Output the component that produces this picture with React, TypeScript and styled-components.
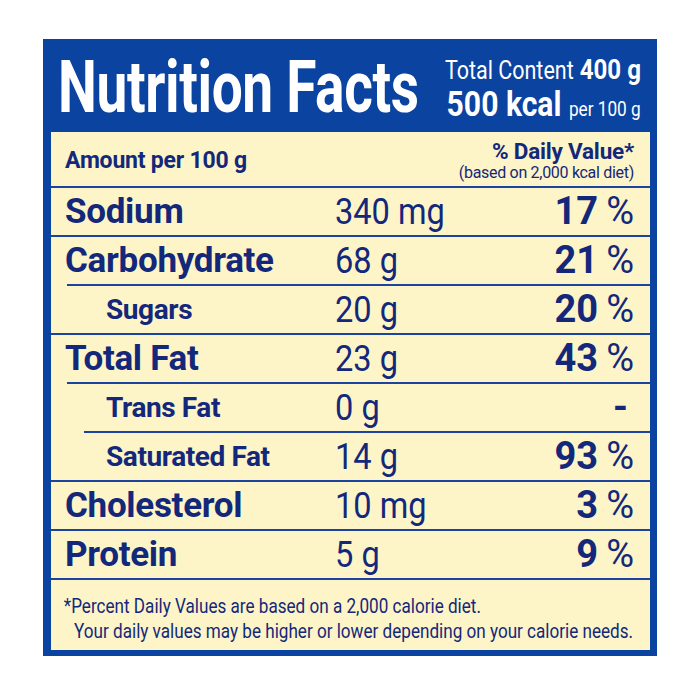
import React from "react";
import styled, { createGlobalStyle } from "styled-components";

const BLUE = "#0b43a0";
const NAVY = "#13287a";
const RULE = "#1a44a0";
const CREAM = "#fdf4c8";

const Global = createGlobalStyle`
  html, body { margin: 0; padding: 0; background: #ffffff; }
  body { font-family: Roboto, "Liberation Sans", Arial, sans-serif; }
`;

const Page = styled.div`
  width: 700px;
  height: 700px;
  padding: 39px 0 0 43px;
  box-sizing: border-box;
`;

const Label = styled.div`
  width: 614px;
  background: ${BLUE};
  display: flex;
  flex-direction: column;
  padding-bottom: 6px;
`;

const Header = styled.header`
  height: 93px;
  display: flex;
  align-items: flex-start;
  padding: 0 16px 0 15px;
  color: #ffffff;
`;

const Title = styled.h1`
  flex: 0 0 340px;
  min-width: 0;
  margin: 13px 0 0;
  font-family: Roboto, "Liberation Sans", sans-serif;
  font-weight: 700;
  font-size: 72px;
  line-height: 72px;
  letter-spacing: -0.5px;
  white-space: nowrap;
  transform: scaleX(0.765);
  transform-origin: left center;
`;

const Summary = styled.div`
  margin: 14px 0 0 auto;
  display: flex;
  flex-direction: column;
  align-items: flex-end;
`;

const SummaryLine = styled.div<{ $size: number; $lh: number }>`
  font-size: ${(p) => p.$size}px;
  line-height: ${(p) => p.$lh}px;
  white-space: nowrap;
  transform: scaleX(0.86);
  transform-origin: right center;
`;

const Light = styled.span<{ $size: number }>`
  font-weight: 400;
  font-size: ${(p) => p.$size}px;
`;

const Heavy = styled.span<{ $size: number }>`
  font-weight: 700;
  font-size: ${(p) => p.$size}px;
`;

const Panel = styled.div`
  margin: 0 7px 0 8px;
  background: ${CREAM};
  color: ${NAVY};
  display: flex;
  flex-direction: column;
`;

const HeadRow = styled.div`
  height: 54px;
  display: flex;
  justify-content: space-between;
  align-items: flex-start;
  padding: 0 16px 0 14px;
`;

const Amount = styled.div`
  margin-top: 17px;
  font-weight: 700;
  font-size: 23px;
  line-height: 23px;
  letter-spacing: -0.2px;
`;

const DailyHead = styled.div`
  margin-top: 8px;
  display: flex;
  flex-direction: column;
  align-items: flex-end;
`;

const DailyTitle = styled.div`
  font-weight: 700;
  font-size: 22.5px;
  line-height: 23px;
  letter-spacing: -0.2px;
`;

const DailyNote = styled.div`
  font-weight: 400;
  font-size: 16px;
  line-height: 19px;
  letter-spacing: -0.3px;
`;

const Rule = styled.div<{ $inset: number }>`
  height: 2px;
  background: ${RULE};
  margin-left: ${(p) => p.$inset}px;
`;

const Row = styled.div`
  height: 47px;
  display: grid;
  grid-template-columns: 272px 1fr auto;
  align-items: center;
  padding: 0 16px 0 14px;
`;

const Name = styled.div<{ $sub: boolean }>`
  padding-left: ${(p) => (p.$sub ? 41 : 0)}px;
  font-weight: 700;
  font-size: ${(p) => (p.$sub ? 28 : 35)}px;
  line-height: 35px;
  letter-spacing: ${(p) => (p.$sub ? -0.4 : -0.3)}px;
  white-space: nowrap;
`;

const Amt = styled.div`
  margin-left: -2px;
  font-weight: 400;
  font-size: 37px;
  line-height: 35px;
  white-space: nowrap;
  transform: scaleX(0.88);
  transform-origin: left center;
`;

const Pct = styled.div`
  display: flex;
  align-items: baseline;
  justify-content: flex-end;
  font-size: 38px;
  line-height: 35px;
  white-space: nowrap;
`;

const PctNum = styled.span`
  font-weight: 700;
`;

const PctSign = styled.span`
  font-weight: 400;
  margin-left: 8px;
`;

const Dash = styled.span`
  font-weight: 700;
  margin-right: 6px;
`;

const Footer = styled.div`
  height: 70px;
  padding-top: 14px;
  box-sizing: border-box;
  display: flex;
  flex-direction: column;
`;

const FootLine = styled.div<{ $indent: number }>`
  padding-left: ${(p) => p.$indent}px;
  font-size: 20px;
  line-height: 25px;
  white-space: nowrap;
  transform: scaleX(0.855);
  transform-origin: left center;
`;

type Nutrient = {
  label: string;
  value: string;
  pct: string;
  sub: boolean;
  inset: number;
};

const rows: Nutrient[] = [
  { label: "Sodium", value: "340 mg", pct: "17", sub: false, inset: 0 },
  { label: "Carbohydrate", value: "68 g", pct: "21", sub: false, inset: 0 },
  { label: "Sugars", value: "20 g", pct: "20", sub: true, inset: 16 },
  { label: "Total Fat", value: "23 g", pct: "43", sub: false, inset: 0 },
  { label: "Trans Fat", value: "0 g", pct: "-", sub: true, inset: 16 },
  { label: "Saturated Fat", value: "14 g", pct: "93", sub: true, inset: 33 },
  { label: "Cholesterol", value: "10 mg", pct: "3", sub: false, inset: 0 },
  { label: "Protein", value: "5 g", pct: "9", sub: false, inset: 0 },
];

export default function App() {
  return (
    <Page>
      <Global />
      <Label>
        <Header>
          <Title>Nutrition Facts</Title>
          <Summary>
            <SummaryLine $size={28} $lh={33}>
              <Light $size={25}>Total Content</Light>{" "}
              <Heavy $size={28}>400 g</Heavy>
            </SummaryLine>
            <SummaryLine $size={35} $lh={36}>
              <Heavy $size={35}>500 kcal</Heavy>{" "}
              <Light $size={20}>per 100 g</Light>
            </SummaryLine>
          </Summary>
        </Header>
        <Panel>
          <HeadRow>
            <Amount>Amount per 100 g</Amount>
            <DailyHead>
              <DailyTitle>% Daily Value*</DailyTitle>
              <DailyNote>(based on 2,000 kcal diet)</DailyNote>
            </DailyHead>
          </HeadRow>
          {rows.map((r) => (
            <React.Fragment key={r.label}>
              <Rule $inset={r.inset} />
              <Row>
                <Name $sub={r.sub}>{r.label}</Name>
                <Amt>{r.value}</Amt>
                <Pct>
                  {r.pct === "-" ? (
                    <Dash>-</Dash>
                  ) : (
                    <>
                      <PctNum>{r.pct}</PctNum>
                      <PctSign>%</PctSign>
                    </>
                  )}
                </Pct>
              </Row>
            </React.Fragment>
          ))}
          <Rule $inset={0} />
          <Footer>
            <FootLine $indent={15}>
              *Percent Daily Values are based on a 2,000 calorie diet.
            </FootLine>
            <FootLine $indent={27}>
              Your daily values may be higher or lower depending on your calorie needs.
            </FootLine>
          </Footer>
        </Panel>
      </Label>
    </Page>
  );
}
